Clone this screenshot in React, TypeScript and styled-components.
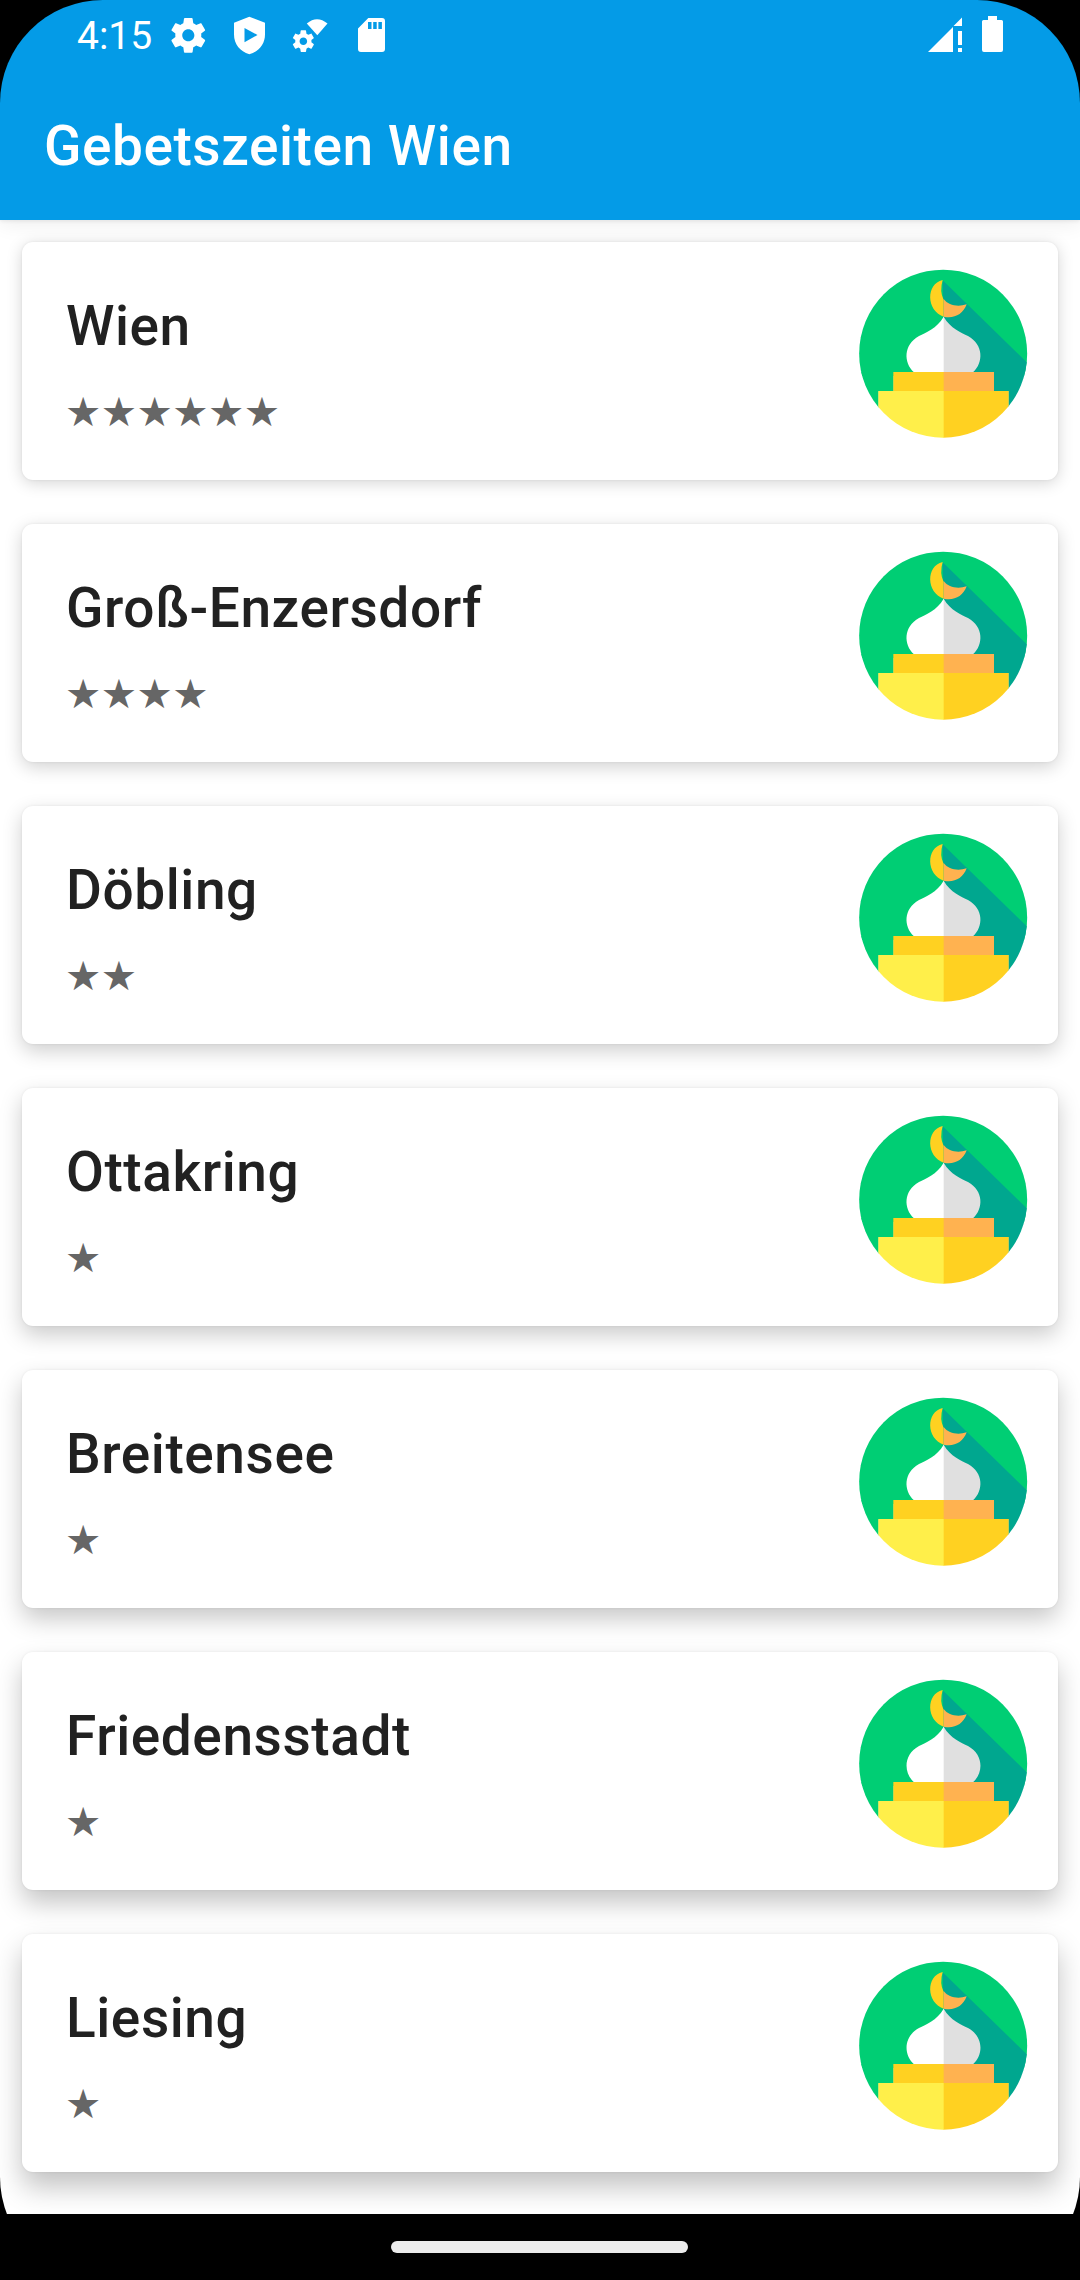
import React from "react";
import styled, { createGlobalStyle } from "styled-components";

const GlobalStyle = createGlobalStyle`
  * { box-sizing: border-box; }
  body { margin: 0; background: #000; }
`;

const Screen = styled.div`
  width: 1080px;
  height: 2280px;
  background: #000;
  border-radius: 103px;
  overflow: hidden;
  display: flex;
  flex-direction: column;
  font-family: Roboto, "Liberation Sans", sans-serif;
`;

const Header = styled.header`
  height: 220px;
  flex: none;
  position: relative;
  z-index: 1;
  background: #049be7;
  color: #fff;
  box-shadow: 0 3px 20px rgba(0, 0, 0, 0.08), 0 1px 4px rgba(0, 0, 0, 0.08);
`;

const StatusBar = styled.div`
  height: 66px;
  padding: 0 74px 0 77px;
  display: flex;
  justify-content: space-between;
`;

const StatusGroup = styled.div`
  display: flex;
  align-items: flex-start;
`;

const Clock = styled.span`
  width: 88px;
  font-size: 39px;
  line-height: 46px;
  padding-top: 13px;
  white-space: nowrap;
`;

const StatusIcon = styled.svg<{ $gap?: number }>`
  display: block;
  height: 66px;
  margin-left: ${(p) => p.$gap ?? 0}px;
  fill: #fff;
`;

const Title = styled.h1`
  margin: 0;
  padding: 46px 44px 0;
  font-size: 55px;
  line-height: 68px;
  font-weight: 500;
  letter-spacing: 0.55px;
`;

const List = styled.main`
  flex: 1;
  min-height: 0;
  padding: 22px;
  display: flex;
  flex-direction: column;
  gap: 44px;
  background: #fff;
`;

const Card = styled.article<{ $depth: number }>`
  height: 238px;
  flex: none;
  display: flex;
  justify-content: space-between;
  align-items: flex-start;
  padding: 24px 27px 0 44px;
  border-radius: 11px;
  background: #fff;
  box-shadow: 0 ${(p) => 3 + p.$depth * 2}px ${(p) => 16 + p.$depth * 2}px
      rgba(0, 0, 0, ${(p) => 0.17 + p.$depth * 0.012}),
    0 0 3px rgba(0, 0, 0, 0.07);
`;

const Info = styled.div`
  display: flex;
  flex-direction: column;
`;

const Name = styled.h2`
  margin: 0;
  padding-top: 26px;
  font-size: 55px;
  line-height: 68px;
  font-weight: 500;
  letter-spacing: 0.57px;
  color: #212121;
`;

const Stars = styled.span`
  padding-top: 26px;
  margin-left: -1px;
  font-family: "DejaVu Sans", sans-serif;
  font-size: 40.5px;
  line-height: 52px;
  letter-spacing: -0.55px;
  color: #666;
`;

const NavBar = styled.footer`
  height: 66px;
  flex: none;
  background: #000;
  display: flex;
  justify-content: center;
  padding: 27px 1px 0 0;
  position: relative;
`;

const Handle = styled.div`
  width: 297px;
  height: 12px;
  border-radius: 6px;
  background: #ececec;
`;

const gear =
  "M19.43 12.98c.04-.32.07-.64.07-.98s-.03-.66-.07-.98l2.11-1.65c.19-.15.24-.42.12-.64l-2-3.46c-.12-.22-.39-.3-.61-.22l-2.49 1c-.52-.4-1.08-.73-1.69-.98l-.38-2.65C14.46 2.18 14.25 2 14 2h-4c-.25 0-.46.18-.49.42l-.38 2.65c-.61.25-1.17.59-1.69.98l-2.49-1c-.23-.09-.49 0-.61.22l-2 3.46c-.13.22-.07.49.12.64l2.11 1.65c-.04.32-.07.65-.07.98s.03.66.07.98l-2.11 1.65c-.19.15-.24.42-.12.64l2 3.46c.12.22.39.3.61.22l2.49-1c.52.4 1.08.73 1.69.98l.38 2.65c.03.24.24.42.49.42h4c.25 0 .46-.18.49-.42l.38-2.65c.61-.25 1.17-.59 1.69-.98l2.49 1c.23.09.49 0 .61-.22l2-3.46c.12-.22.07-.49-.12-.64l-2.11-1.65zM12 15.5c-1.93 0-3.5-1.57-3.5-3.5s1.57-3.5 3.5-3.5 3.5 1.57 3.5 3.5-1.57 3.5-3.5 3.5z";

const MosqueArt = styled.svg`
  width: 176px;
  height: 176px;
  flex: none;
`;

function Mosque({ id }: { id: string }) {
  return (
    <MosqueArt viewBox="45 48 528 528">
      <clipPath id={id}>
        <circle cx="309.5" cy="311" r="252" />
      </clipPath>
      <g clipPath={`url(#${id})`}>
        <rect x="45" y="48" width="528" height="330" fill="#00ce74" />
        <path d="M45 366H161V424H116V576H45z" fill="#00ce74" />
        <path d="M308 91L580 356V576H505V423H311V200z" fill="#00a78f" />
        <path d="M312 200H311C290 236 258 247 237 258C190 284 190 338 222 367H312z" fill="#fff" />
        <path d="M311 200C332 236 363 247 384 258C431 284 431 338 399 367H311z" fill="#e0e0e0" />
        <path d="M308 90C257 101 258 182 311 200V150Q298 124 308 90z" fill="#ffd121" />
        <path d="M311 147C325 166 353 172 380 163C369 194 341 207 311 200z" fill="#ffb250" />
        <path d="M160 366H312V424H160z" fill="#ffd121" />
        <path d="M311 366H462V424H311z" fill="#ffb250" />
        <path d="M115 423H312V576H115z" fill="#ffef4a" />
        <path d="M311 423H506V576H311z" fill="#ffd121" />
      </g>
    </MosqueArt>
  );
}

const places = [
  { name: "Wien", stars: 6 },
  { name: "Groß-Enzersdorf", stars: 4 },
  { name: "Döbling", stars: 2 },
  { name: "Ottakring", stars: 1 },
  { name: "Breitensee", stars: 1 },
  { name: "Friedensstadt", stars: 1 },
  { name: "Liesing", stars: 1 },
];

export default function App() {
  return (
    <>
      <GlobalStyle />
      <Screen>
        <Header>
          <StatusBar>
            <StatusGroup>
              <Clock>4:15</Clock>
              <StatusIcon width="46" viewBox="165 0 46 66">
                <g transform="translate(167.5 14.5) scale(1.733)">
                  <path d={gear} />
                </g>
              </StatusIcon>
              <StatusIcon $gap={19} width="38" viewBox="230 0 38 66">
                <path
                  fillRule="evenodd"
                  d="M249.3 16.7L265 22.7V34.5C265 44 259 51.5 249.3 54.2C240 51.5 234 44 234 34.5V22.7zM244.5 28V42.2L257.5 35z"
                />
              </StatusIcon>
              <StatusIcon $gap={22} width="42" viewBox="290 0 42 66">
                <g transform="translate(290.4 28.2) scale(1.08)">
                  <path d={gear} />
                </g>
                <path d="M306.8 23.5Q317 15 327.5 23.5L317.3 35.3z" />
              </StatusIcon>
              <StatusIcon $gap={22} width="40" viewBox="354 0 40 66">
                <path
                  fillRule="evenodd"
                  d="M368.3 18H382Q385 18 385 21V49Q385 52 382 52H361Q358 52 358 49V28.5zM368 22V29H371.5V22zM373.2 22V29H376.7V22zM378.4 22V29H381.9V22z"
                />
              </StatusIcon>
            </StatusGroup>
            <StatusGroup>
              <StatusIcon width="36" viewBox="927 0 36 66">
                <path d="M928 52L953 27V52zM953.5 26L962 17.6V26zM958 31H962V45H958zM958 48H962V52H958z" />
              </StatusIcon>
              <StatusIcon $gap={17} width="26" viewBox="980 0 26 66">
                <path d="M988 16H997V20H1001.5Q1003 20 1003 21.5V50Q1003 52 1001 52H984Q982 52 982 50V21.5Q982 20 983.5 20H988z" />
              </StatusIcon>
            </StatusGroup>
          </StatusBar>
          <Title>Gebetszeiten Wien</Title>
        </Header>
        <List>
          {places.map((place, i) => (
            <Card key={place.name} $depth={i}>
              <Info>
                <Name>{place.name}</Name>
                <Stars>{"★".repeat(place.stars)}</Stars>
              </Info>
              <Mosque id={`mosque-${i}`} />
            </Card>
          ))}
        </List>
        <NavBar>
          <Handle />
        </NavBar>
      </Screen>
    </>
  );
}
